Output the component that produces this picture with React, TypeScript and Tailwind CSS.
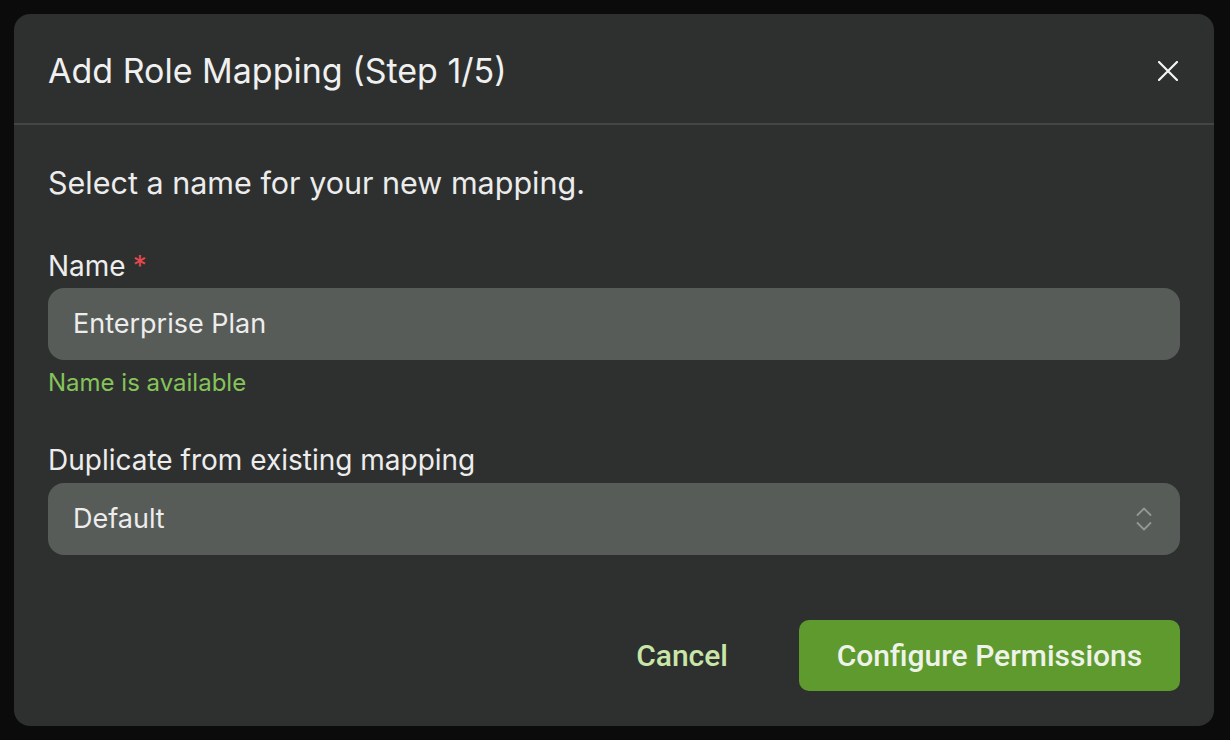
function Field({ label, required, gap, children }: { label: string; required?: boolean; gap: string; children: React.ReactNode }) {
  return (
    <div className="flex flex-col">
      <label className="text-[28px] leading-[34px] text-[#ededed]">
        {label}
        {required && <span className="ml-[7px] text-[#e5484d]">*</span>}
      </label>
      <div className={gap}>{children}</div>
    </div>
  )
}

export default function App() {
  return (
    <div className="h-[740px] w-[1230px] bg-[#0b0b0b] p-[14px] font-['Inter',sans-serif]">
      <div className="flex h-[712px] w-[1200px] flex-col rounded-[16px] bg-[#2d302f]">
        <header className="flex h-[111px] items-center justify-between border-b-2 border-[#434645] pt-[4px] pl-[34px] pr-[36px]">
          <h2 className="text-[34px] font-normal text-[#f0f0f0]">Add Role Mapping (Step 1/5)</h2>
          <button className="text-[#f5f5f5]">
            <svg width="20" height="20" viewBox="0 0 20 20" fill="none" stroke="currentColor" strokeWidth="2.2" strokeLinecap="round">
              <path d="M1 1l18 18M19 1L1 19" />
            </svg>
          </button>
        </header>

        <section className="flex flex-1 flex-col px-[34px] pt-[40px] pb-[35px]">
          <p className="text-[30.5px] leading-[36px] text-[#ececec]">Select a name for your new mapping.</p>

          <div className="mt-[48px]">
            <Field label="Name" required gap="mt-[5px]">
              <div className="flex h-[72px] items-center rounded-[16px] bg-[#575c58] px-[25px] text-[27px] text-[#ededed]">
                Enterprise Plan
              </div>
            </Field>
            <p className="mt-[8px] text-[24px] leading-[30px] text-[#86c35a]">Name is available</p>
          </div>

          <div className="mt-[45px]">
            <Field label="Duplicate from existing mapping" gap="mt-[6px]">
              <div className="flex h-[72px] items-center justify-between rounded-[16px] bg-[#575c58] pl-[25px] pr-[28px] text-[27px] text-[#ededed]">
                <span>Default</span>
                <svg width="16" height="24" viewBox="0 0 16 24" fill="none" stroke="#929894" strokeWidth="1.8" strokeLinecap="round" strokeLinejoin="round">
                  <path d="M1.5 8L8 1.5 14.5 8" />
                  <path d="M1.5 16L8 22.5 14.5 16" />
                </svg>
              </div>
            </Field>
          </div>

          <div className="mt-auto flex items-center justify-end gap-[71px] font-['Roboto',sans-serif]">
            <button className="text-[30px] font-medium text-[#c8e6a8]">Cancel</button>
            <button className="flex h-[71px] w-[381px] items-center justify-center rounded-[10px] bg-[#5f9a2e] text-[30px] font-medium text-[#eef3ea]">
              Configure Permissions
            </button>
          </div>
        </section>
      </div>
    </div>
  )
}
